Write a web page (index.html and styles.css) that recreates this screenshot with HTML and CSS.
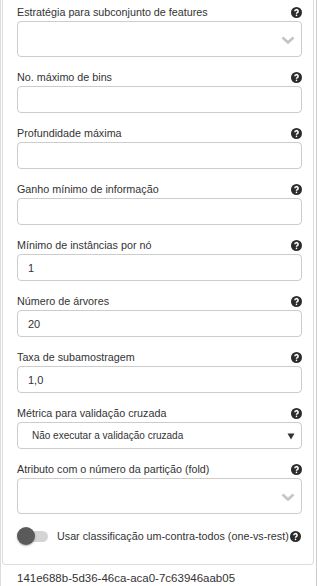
FILE: index.html
```html
<!DOCTYPE html>
<html lang="pt">
<head>
    <meta charset="UTF-8">
    <meta name="viewport" content="width=device-width, initial-scale=1.0">
    <title>Parâmetros</title>
    <link rel="stylesheet" href="styles.css">
</head>
<body>
    <div class="frame">
        <div class="card">
            <div class="field">
                <div class="label-row">
                    <label>Estratégia para subconjunto de features</label>
                    <svg class="help" viewBox="0 0 12 12"><circle cx="6" cy="6" r="6"/><path d="M4.2 4.6a1.8 1.7 0 1 1 2.6 1.5c-.6.3-.8.6-.8 1.3"/><circle class="dot" cx="6" cy="9.2" r=".9"/></svg>
                </div>
                <div class="picker">
                    <span></span>
                    <svg class="chevron" viewBox="0 0 14 10"><path d="M1.5 2.5l5.5 5 5.5-5"/></svg>
                </div>
            </div>

            <div class="field">
                <div class="label-row">
                    <label>No. máximo de bins</label>
                    <svg class="help" viewBox="0 0 12 12"><circle cx="6" cy="6" r="6"/><path d="M4.2 4.6a1.8 1.7 0 1 1 2.6 1.5c-.6.3-.8.6-.8 1.3"/><circle class="dot" cx="6" cy="9.2" r=".9"/></svg>
                </div>
                <input type="text" value="">
            </div>

            <div class="field">
                <div class="label-row">
                    <label>Profundidade máxima</label>
                    <svg class="help" viewBox="0 0 12 12"><circle cx="6" cy="6" r="6"/><path d="M4.2 4.6a1.8 1.7 0 1 1 2.6 1.5c-.6.3-.8.6-.8 1.3"/><circle class="dot" cx="6" cy="9.2" r=".9"/></svg>
                </div>
                <input type="text" value="">
            </div>

            <div class="field">
                <div class="label-row">
                    <label>Ganho mínimo de informação</label>
                    <svg class="help" viewBox="0 0 12 12"><circle cx="6" cy="6" r="6"/><path d="M4.2 4.6a1.8 1.7 0 1 1 2.6 1.5c-.6.3-.8.6-.8 1.3"/><circle class="dot" cx="6" cy="9.2" r=".9"/></svg>
                </div>
                <input type="text" value="">
            </div>

            <div class="field">
                <div class="label-row">
                    <label>Mínimo de instâncias por nó</label>
                    <svg class="help" viewBox="0 0 12 12"><circle cx="6" cy="6" r="6"/><path d="M4.2 4.6a1.8 1.7 0 1 1 2.6 1.5c-.6.3-.8.6-.8 1.3"/><circle class="dot" cx="6" cy="9.2" r=".9"/></svg>
                </div>
                <input type="text" value="1">
            </div>

            <div class="field">
                <div class="label-row">
                    <label>Número de árvores</label>
                    <svg class="help" viewBox="0 0 12 12"><circle cx="6" cy="6" r="6"/><path d="M4.2 4.6a1.8 1.7 0 1 1 2.6 1.5c-.6.3-.8.6-.8 1.3"/><circle class="dot" cx="6" cy="9.2" r=".9"/></svg>
                </div>
                <input type="text" value="20">
            </div>

            <div class="field">
                <div class="label-row">
                    <label>Taxa de subamostragem</label>
                    <svg class="help" viewBox="0 0 12 12"><circle cx="6" cy="6" r="6"/><path d="M4.2 4.6a1.8 1.7 0 1 1 2.6 1.5c-.6.3-.8.6-.8 1.3"/><circle class="dot" cx="6" cy="9.2" r=".9"/></svg>
                </div>
                <input type="text" value="1,0">
            </div>

            <div class="field">
                <div class="label-row">
                    <label>Métrica para validação cruzada</label>
                    <svg class="help" viewBox="0 0 12 12"><circle cx="6" cy="6" r="6"/><path d="M4.2 4.6a1.8 1.7 0 1 1 2.6 1.5c-.6.3-.8.6-.8 1.3"/><circle class="dot" cx="6" cy="9.2" r=".9"/></svg>
                </div>
                <div class="native-select">
                    <span>Não executar a validação cruzada</span>
                    <svg class="caret" viewBox="0 0 8 8"><path d="M0.5 1.5h7l-3.5 6z"/></svg>
                </div>
            </div>

            <div class="field">
                <div class="label-row">
                    <label>Atributo com o número da partição (fold)</label>
                    <svg class="help" viewBox="0 0 12 12"><circle cx="6" cy="6" r="6"/><path d="M4.2 4.6a1.8 1.7 0 1 1 2.6 1.5c-.6.3-.8.6-.8 1.3"/><circle class="dot" cx="6" cy="9.2" r=".9"/></svg>
                </div>
                <div class="picker">
                    <span></span>
                    <svg class="chevron" viewBox="0 0 14 10"><path d="M1.5 2.5l5.5 5 5.5-5"/></svg>
                </div>
            </div>

            <div class="switch-row">
                <span class="switch"><span class="knob"></span></span>
                <span class="switch-label">Usar classificação um-contra-todos (one-vs-rest)</span>
                <svg class="help" viewBox="0 0 12 12"><circle cx="6" cy="6" r="6"/><path d="M4.2 4.6a1.8 1.7 0 1 1 2.6 1.5c-.6.3-.8.6-.8 1.3"/><circle class="dot" cx="6" cy="9.2" r=".9"/></svg>
            </div>
        </div>
        <p class="task-id">141e688b-5d36-46ca-aca0-7c63946aab05</p>
    </div>
</body>
</html>
```

FILE: styles.css
```css
body {
    margin: 0;
    font-family: "Liberation Sans", Arial, sans-serif;
    font-size: 10.75px;
    color: #333;
    background: #fff;
}
.frame {
    min-height: 586px;
    box-sizing: border-box;
    border-left: 1px solid #ddd;
    border-right: 1px solid #ccc;
}
.card {
    margin: 0 2px 0 1px;
    padding: 4px 11px 18px 14px;
    border: 1px solid #ddd;
    border-top: none;
    border-radius: 0 0 4px 4px;
}
.field {
    margin-bottom: 12px;
}
.label-row {
    display: flex;
    justify-content: space-between;
    align-items: center;
    height: 17px;
}
.label-row label {
    line-height: 17px;
}
.help {
    width: 11px;
    height: 11px;
    flex-shrink: 0;
}
.help circle {
    fill: #2b2b2b;
}
.help path {
    fill: none;
    stroke: #fff;
    stroke-width: 1.7;
}
.help .dot {
    fill: #fff;
}
input {
    display: block;
    width: 100%;
    height: 27px;
    box-sizing: border-box;
    padding: 0 10px;
    border: 1px solid #ccc;
    border-radius: 4px;
    font-family: inherit;
    font-size: 11px;
    color: #333;
    outline: none;
}
.picker {
    display: flex;
    justify-content: space-between;
    align-items: center;
    height: 36px;
    box-sizing: border-box;
    padding: 0 6px 0 10px;
    border: 1px solid #ccc;
    border-radius: 4px;
}
.chevron {
    width: 14px;
    height: 10px;
    margin-top: 2px;
}
.chevron path {
    fill: none;
    stroke: #c4c4c4;
    stroke-width: 2.6;
}
.native-select {
    display: flex;
    justify-content: space-between;
    align-items: center;
    height: 27px;
    box-sizing: border-box;
    padding: 0 6px 0 14px;
    border: 1px solid #ccc;
    border-radius: 4px;
    font-size: 10px;
}
.caret {
    width: 8px;
    height: 8px;
}
.caret path {
    fill: #333;
}
.switch-row {
    display: flex;
    align-items: center;
    height: 20px;
}
.switch {
    display: flex;
    align-items: center;
    flex-shrink: 0;
    width: 28px;
    height: 11px;
    margin: 0 9px 0 3px;
    border-radius: 6px;
    background: #d4d4d4;
}
.knob {
    width: 18px;
    height: 18px;
    margin-left: -3px;
    border-radius: 50%;
    background: #5a5a5a;
    box-shadow: 0 1px 2px rgba(0, 0, 0, 0.3);
}
.switch-label {
    margin-right: 1px;
    white-space: nowrap;
}
.task-id {
    margin: 5px 0 0 16px;
    font-size: 11.5px;
    line-height: 16px;
}
```
